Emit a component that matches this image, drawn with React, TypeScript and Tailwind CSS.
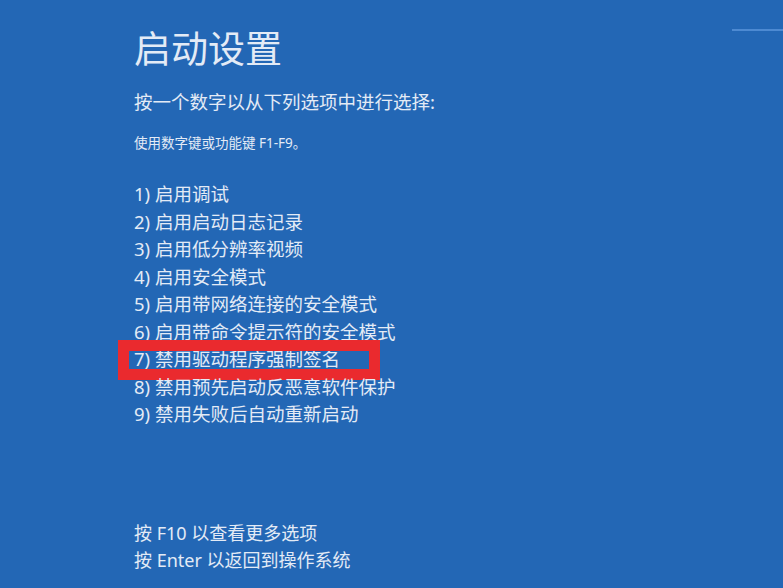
import React from 'react';

const options = [
  '1) 启用调试',
  '2) 启用启动日志记录',
  '3) 启用低分辨率视频',
  '4) 启用安全模式',
  '5) 启用带网络连接的安全模式',
  '6) 启用带命令提示符的安全模式',
  '7) 禁用驱动程序强制签名',
  '8) 禁用预先启动反恶意软件保护',
  '9) 禁用失败后自动重新启动',
];

export default function App() {
  return (
    <div
      className="relative h-[588px] w-full overflow-hidden bg-[#2367b5] text-[#e3ebf6]"
      style={{ fontFamily: '"Noto Sans", "Noto Sans CJK SC", sans-serif' }}
    >
      {/* faint line in the top right corner */}
      <div className="absolute right-0 top-[29px] h-[2px] w-[51px] bg-[#4d8ad2]" />

      <div className="flex flex-col pl-[134px] pt-[29px]">
        <h1 className="text-[37px] leading-[40px] font-normal">启动设置</h1>
        <p className="mt-[21px] text-[18.5px] leading-[24px]">按一个数字以从下列选项中进行选择:</p>
        <p className="mt-[19px] text-[13.5px] leading-[20px]">使用数字键或功能键 F1-F9。</p>

        <ul className="mt-[27px] flex flex-col">
          {options.map((item, i) => (
            <li key={item} className="relative text-[18.5px] leading-[27.5px]">
              {item}
              {i === 6 && (
                <div className="absolute left-[-16px] top-[-5px] h-[40px] w-[262px] border-[11px] border-[#ea2a2e]" />
              )}
            </li>
          ))}
        </ul>

        <div className="mt-[92px] flex flex-col text-[18px] leading-[27px]">
          <p>按 F10 以查看更多选项</p>
          <p>按 Enter 以返回到操作系统</p>
        </div>
      </div>
    </div>
  );
}
